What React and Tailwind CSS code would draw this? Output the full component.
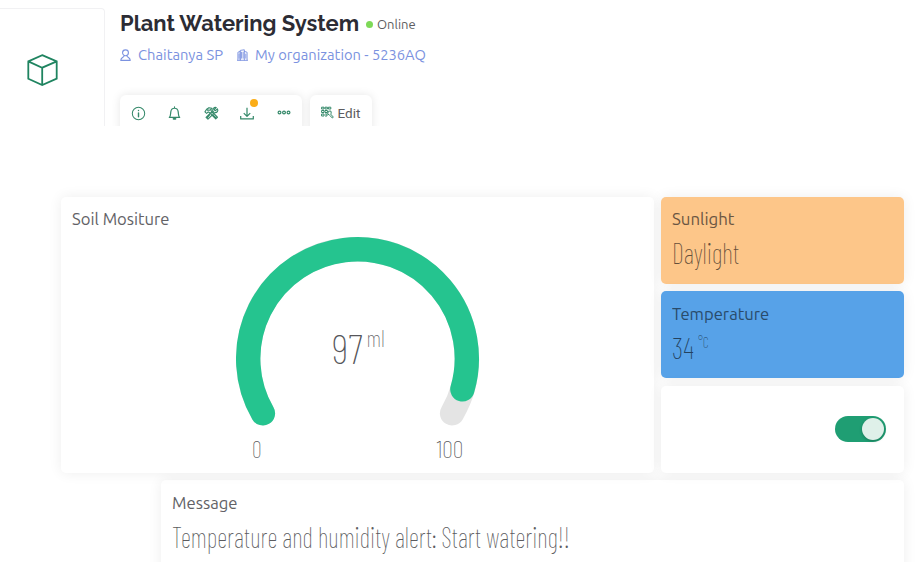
import { useLayoutEffect, useRef, useState } from "react";

// Single line of text, condensed or widened horizontally to the given width.
function Fit({ width, className = "", children }) {
  const ref = useRef(null);
  const [scale, setScale] = useState(1);
  useLayoutEffect(() => {
    setScale(width / ref.current.offsetWidth);
  }, [width, children]);
  return (
    <span className={"block shrink-0 whitespace-nowrap " + className} style={{ width }}>
      <span ref={ref} className="inline-block origin-left align-top" style={{ transform: `scaleX(${scale})` }}>
        {children}
      </span>
    </span>
  );
}

function Icon({ className, children, box = "0 0 16 16" }) {
  return (
    <svg viewBox={box} className={"shrink-0 " + className} fill="none" stroke="currentColor" strokeLinecap="round" strokeLinejoin="round">
      {children}
    </svg>
  );
}

function Header() {
  return (
    <header className="flex h-[126px] overflow-hidden">
      <div className="mt-2 h-[140px] w-[105px] shrink-0 rounded-tr border-t border-r border-[#f1f1f3] pt-[45px] pl-[27px]">
        <Icon box="0 0 32 32" className="h-8 w-8 text-[#1f8460]">
          <path strokeWidth="1.8" strokeLinejoin="miter" d="M15.2 1.2 29.7 7.4V24.7L15.2 31 1.3 24.7V7.4ZM1.3 7.4 15.2 13.7 29.7 7.4M15.2 13.7V31" />
        </Icon>
      </div>
      <div className="pl-[14.5px]">
        <div className="flex h-[46px] items-center">
          <Fit width={239} className="font-['Raleway','Lato',sans-serif] text-[22.5px] leading-[46px] font-bold text-[#2c2c34]">
            Plant Watering System
          </Fit>
          <span className="mt-[3px] ml-[7px] h-[7px] w-[7px] rounded-full bg-[#7ed957]" />
          <Fit width={38.5} className="mt-[2px] ml-1 text-[13.5px] leading-5 text-[#5c5c60]">Online</Fit>
        </div>
        <div className="flex h-[18px] items-center text-[15.3px] leading-[18px] text-[#7b92e0]">
          <Icon box="0 0 12 14" className="h-[13px] w-[11px]">
            <circle cx="6" cy="4.1" r="3.2" strokeWidth="1.2" />
            <path strokeWidth="1.2" d="M4.5 7.3C4.5 9.3 1 8.6 .8 12.3H11.2C11 8.6 7.5 9.3 7.5 7.3" />
          </Icon>
          <Fit width={85} className="ml-[7px]">Chaitanya SP</Fit>
          <Icon box="0 0 12 13" className="ml-[14px] h-[12px] w-[11px]">
            <path d="M1 12V3.5L3.5 2.5V12M3.5 12V1.5L8 .8V12M8 2.5 11 3.5V12M.5 12.3H11.5M5 3.5V10M6.7 3.5V10M9.6 5.5V10M2.2 5.5V10" />
          </Icon>
          <Fit width={171} className="ml-[7.5px]">My organization - 5236AQ</Fit>
        </div>
        <div className="mt-[31px] ml-[0.5px] flex gap-2">
          <div className="flex h-10 w-[182px] rounded-md bg-white pt-[11px] pl-[11px] text-[#35896a] shadow-[0_0_10px_rgba(0,0,0,0.10)]">
            <Icon className="h-[15px] w-[15px]">
              <circle cx="8" cy="8" r="6.6" strokeWidth="1.1" />
              <path strokeWidth="1.5" d="M8 7.3V11.4M8 4.7V4.8" />
            </Icon>
            <Icon className="ml-[21px] h-[15px] w-[15px]">
              <path strokeWidth="1.3" d="M8 1V2.2M2.5 12.2H13.5C12 10.5 12.2 9 12 6.5 11.7 3.7 10 2.4 8 2.4S4.3 3.7 4 6.5C3.8 9 4 10.5 2.5 12.2Z" />
              <path strokeWidth="2" d="M7 13.7H9" />
            </Icon>
            <Icon className="ml-[21.5px] h-[15px] w-[15px]">
              <path strokeWidth="1.2" d="M1 6.3 2.8 3.5 5.3 1.8 8.5 2.4 7 4 7.8 5.2 14.3 12 12.5 13.8 5.8 7 4.5 6.3 2.8 7.8ZM13 1.7 10.8 3.8 12 5.1 14.4 3.1C15.5 5.3 13.8 7.5 11.5 7L4.2 14.1 2.2 12.1 9.4 5C8.9 3 11 .9 13 1.7ZM3.7 4.4 5.9 4.4M8.4 7.6 10.2 6.1M9.2 9.3 13 13M6 9.5 3.8 12.2" />
            </Icon>
            <div className="relative ml-[21.5px] h-[14px] w-[14px]">
              <Icon className="h-[14px] w-[14px]">
                <path strokeWidth="1.4" strokeLinecap="butt" d="M8 2V11.5M4.3 8.2 8 11.8 11.7 8.2M.8 11.5V14.8H15.2V11.5" />
              </Icon>
              <span className="absolute -top-[7px] left-[10px] h-[8px] w-[8px] rounded-full bg-[#fbad18]" />
            </div>
            <Icon box="0 0 14 14" className="ml-[22.5px] h-[14px] w-[14px]">
              <circle cx="2.5" cy="6.5" r="1.4" strokeWidth="1.2" />
              <circle cx="7" cy="6.5" r="1.4" strokeWidth="1.2" />
              <circle cx="11.5" cy="6.5" r="1.4" strokeWidth="1.2" />
            </Icon>
          </div>
          <div className="flex h-10 w-[62px] rounded-md bg-white pt-[11px] pl-[11px] shadow-[0_0_10px_rgba(0,0,0,0.10)]">
            <Icon box="0 0 13 13" className="h-[13px] w-[13px] text-[#35896a]">
              <path strokeWidth="1" d="M1 1.2H3V3H1ZM4.4 1.2H6.4V3H4.4ZM7.8 1.2H9.8V3H7.8ZM1 4.5H3V6.5H1ZM4.4 4.5H6.4V6.5H4.4ZM1 8H3V10H1ZM4.4 8H6V10H4.4M7.8 5.2 9.8 5 10.3 7.2 9.5 8 12.3 11 11.4 12 8.4 9.1 7 8.2Z" />
            </Icon>
            <Fit width={23} className="ml-[3.5px] font-['Roboto',sans-serif] text-[13.5px] leading-[15px] text-[#5c5c60]">Edit</Fit>
          </div>
        </div>
      </div>
    </header>
  );
}

const CARD = "rounded-[5px] shadow-[0_0_14px_rgba(0,0,0,0.07)] ";
const LABEL = "text-[16.3px] leading-[22px] ";
const VALUE = "font-['Barlow_Condensed','Roboto',sans-serif] font-extralight ";

function Gauge() {
  return (
    <svg viewBox="0 0 244 190" className="h-[190px] w-[244px]" fill="none" strokeWidth="24.4" strokeLinecap="round">
      <path stroke="#e4e4e4" d="M26.9 176.3A109.3 109.3 0 1 1 216.1 176.3" />
      <path stroke="#25c48f" d="M26.9 176.3A109.3 109.3 0 1 1 226.4 152.3" />
    </svg>
  );
}

function SoilCard() {
  return (
    <section className={CARD + "h-[276px] w-[593px] bg-white pt-[11.3px] pl-[11px]"}>
      <Fit width={98} className={LABEL + "text-[#626266]"}>Soil Mositure</Fit>
      <div className="mt-[6.7px] ml-[164px] grid w-[244px]">
        <div className="col-start-1 row-start-1"><Gauge /></div>
        <div className="col-start-1 row-start-1 flex pt-[85px] pl-[95.5px]">
          <Fit width={31} className={VALUE + "text-[41px] leading-[52px] text-[#56565a]"}>97</Fit>
          <Fit width={18} className={VALUE + "ml-[4px] text-[23px] leading-[33px] text-[#66666a]"}>ml</Fit>
        </div>
      </div>
      <div className="mt-[8px] ml-[180px] flex gap-[174.5px] text-[24px] leading-[28px] text-[#5c5c60]">
        <Fit width={10} className={VALUE}>0</Fit>
        <Fit width={27} className={VALUE}>100</Fit>
      </div>
    </section>
  );
}

function SideCards() {
  return (
    <div className="flex w-[243px] flex-col gap-[7.3px]">
      <section className={CARD + "h-[87.2px] bg-[#fdc689] pt-[11.3px] pl-[11px]"}>
        <Fit width={62} className={LABEL + "text-[#6a5542]"}>Sunlight</Fit>
        <Fit width={67} className={VALUE + "mt-[7px] text-[28.5px] leading-[32px] text-[#654f3a]"}>Daylight</Fit>
      </section>
      <section className={CARD + "h-[87.2px] bg-[#57a2e8] pt-[11.5px] pl-[11px]"}>
        <Fit width={97} className={LABEL + "text-[#294b6b]"}>Temperature</Fit>
        <div className="mt-[7px] flex text-[#24425f]">
          <Fit width={22} className={VALUE + "text-[28.5px] leading-[32px]"}>34</Fit>
          <Fit width={11} className={VALUE + "ml-[4px] text-[16px] leading-[20px]"}>°C</Fit>
        </div>
      </section>
      <section className={CARD + "flex h-[87.2px] items-center justify-end bg-white pr-[18px]"}>
        <div className="flex h-[26px] w-[51px] items-center justify-end rounded-full bg-[#1f9e73] pr-[2px]">
          <span className="h-[22px] w-[22px] rounded-full bg-[#dff0e9] shadow-[0_1px_3px_rgba(0,0,0,0.25)]" />
        </div>
      </section>
    </div>
  );
}

export default function App() {
  return (
    <main className="h-[582px] w-[918px] overflow-hidden bg-white font-['Ubuntu','Noto_Sans',sans-serif]">
      <Header />
      <div className="h-[436px] overflow-hidden pt-[70.7px] pl-[61px]">
        <div className="flex gap-[7px]">
          <SoilCard />
          <SideCards />
        </div>
        <section className={CARD + "mt-[7px] ml-[100px] h-[120px] w-[743px] bg-white pt-[12px] pl-[11px]"}>
          <Fit width={65.5} className={LABEL + "text-[#626266]"}>Message</Fit>
          <Fit width={398} className={VALUE + "mt-[7px] text-[28.5px] leading-[32px] text-[#5c5c60]"}>
            Temperature and humidity alert: Start watering!!
          </Fit>
        </section>
      </div>
    </main>
  );
}
